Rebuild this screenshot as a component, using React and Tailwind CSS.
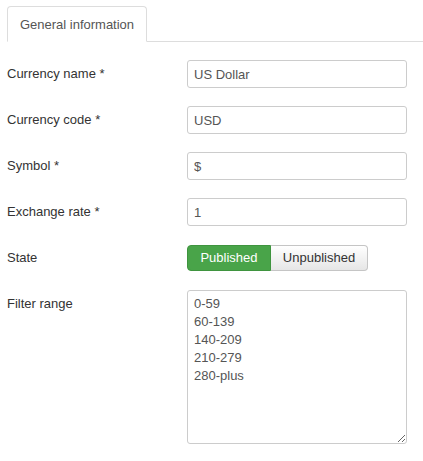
import React from "react";

const font = { fontFamily: '"Liberation Sans", Arial, sans-serif' };

function Field({ label, value }) {
  return (
    <div className="flex items-center mb-[18px]">
      <label className="w-[180px] shrink-0 text-[13px] text-[#333]">{label}</label>
      <input
        readOnly
        defaultValue={value}
        className="w-[220px] h-[28px] px-[6px] border border-[#ccc] rounded-[3px] text-[13px] text-[#555] bg-white outline-none"
      />
    </div>
  );
}

export default function App() {
  return (
    <div className="bg-white min-h-screen pl-[7px] pt-[6px]" style={font}>
      {/* Tabs */}
      <ul className="flex border-b border-[#ddd]">
        <li className="-mb-px">
          <a className="block w-[140px] h-[36px] leading-[35px] text-center text-[13px] text-[#555] bg-white border border-[#ddd] border-b-white rounded-t-[4px]">
            General information
          </a>
        </li>
      </ul>

      <div className="pt-[18px]">
        <Field label="Currency name *" value="US Dollar" />
        <Field label="Currency code *" value="USD" />
        <Field label="Symbol *" value="$" />
        <Field label="Exchange rate *" value="1" />

        {/* State */}
        <div className="flex items-center h-[28px] mb-[18px]">
          <label className="w-[180px] shrink-0 text-[13px] text-[#333]">State</label>
          <div className="flex h-[26px]">
            <button className="w-[84px] text-[13px] text-white bg-[#49a449] border border-[#3f943f] rounded-l-[4px]">
              Published
            </button>
            <button className="w-[97px] text-[13px] text-[#333] bg-gradient-to-b from-white to-[#e6e6e6] border border-[#c5c5c5] border-l-0 rounded-r-[4px]">
              Unpublished
            </button>
          </div>
        </div>

        {/* Filter range */}
        <div className="flex items-start">
          <label className="w-[180px] shrink-0 pt-[4px] text-[13px] text-[#333]">Filter range</label>
          <textarea
            readOnly
            defaultValue={"0-59\n60-139\n140-209\n210-279\n280-plus"}
            className="w-[220px] h-[154px] px-[6px] py-[4px] leading-[18px] border border-[#ccc] rounded-[3px] text-[13px] text-[#555] bg-white outline-none"
            style={font}
          />
        </div>
      </div>
    </div>
  );
}
